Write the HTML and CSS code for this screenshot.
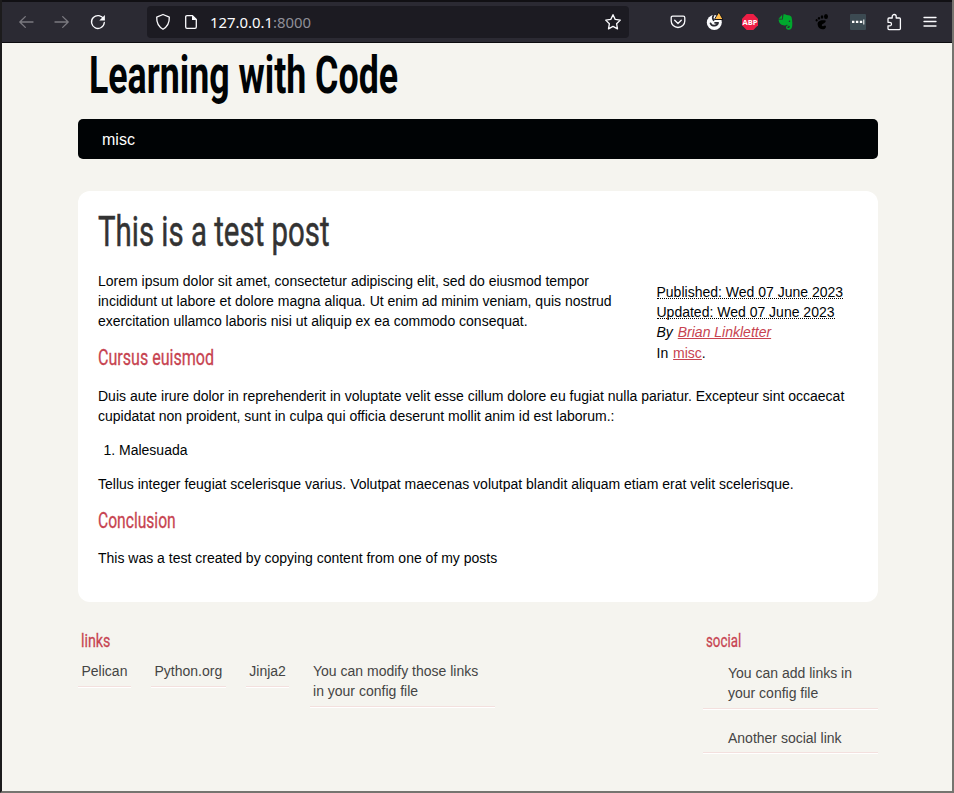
FILE: index.html
```html
<!DOCTYPE html>
<html lang="en">
<head>
<meta charset="utf-8">
<title>This is a test post</title>
<link rel="stylesheet" href="styles.css">
</head>
<body>
<div class="window">
  <header class="toolbar">
    <div class="nav-buttons">
      <svg class="dim" width="16" height="16" viewBox="0 0 16 16"><path d="M15 8H2M7.3 2.6 1.8 8l5.500 5.400"/></svg>
      <svg class="dim" width="16" height="16" viewBox="0 0 16 16"><path d="M1 8h13M8.700 2.600 14.200 8l-5.500 5.400"/></svg>
      <svg width="16" height="16" viewBox="0 0 16 16"><path d="M13.700 5.300A6.400 6.400 0 1 0 14.300 8.500"/><path class="solid" d="M14.900 1v5.600H9.300z"/></svg>
    </div>
    <div class="address">
      <svg width="16" height="18" viewBox="0 0 16 18"><path d="M8 1.500 14.300 4.100C14.500 9.500 12.500 13.800 8 16.300 3.500 13.800 1.500 9.500 1.700 4.100z"/></svg>
      <svg class="page-icon" width="14" height="16" viewBox="0 0 14 16"><path d="M8.500 1.700H3Q1.700 1.700 1.700 3v10Q1.700 14.300 3 14.300h8q1.300 0 1.300-1.300V5.500z"/><path class="solid" d="M8 1.500v4.600h4.700z"/></svg>
      <span class="url">127.0.0.1<span class="port">:8000</span></span>
      <svg class="star" width="18" height="18" viewBox="0 0 18 18"><path d="m9 1.700 2.200 4.700 5.100.7-3.700 3.600.9 5.200L9 13.400l-4.500 2.500.9-5.200L1.700 7.100l5.100-.7z"/></svg>
    </div>
    <div class="extensions">
      <svg width="18" height="18" viewBox="0 0 18 18"><path d="M3.700 3.200h10.600q1.500 0 1.500 1.500V8a6.800 6.500 0 0 1-13.600 0V4.700q0-1.500 1.500-1.500z"/><path d="m5.700 7.300 3.300 3.200 3.300-3.200"/></svg>
      <svg width="18" height="20" viewBox="0 0 18 20"><circle class="solid" cx="9.300" cy="10.500" r="7.500"/><path class="cut" d="M8.600 3.500Q6.800 5.500 8.600 8.300M5.500 11.300q1 2.400 4 2.400 2.900-.2 3.600-2.900H10"/><path class="warn" d="m14 .3 4 7.200H9.800z"/></svg>
      <svg width="18" height="18" viewBox="0 0 18 18"><path class="red" d="M5.700 1h6.600L17 5.700v6.600L12.300 17H5.700L1 12.300V5.700z"/><text class="abp" x="9" y="12" text-anchor="middle">ABP</text></svg>
      <svg width="18" height="18" viewBox="0 0 18 18"><path class="green" d="M6.500 1.300Q8.500.8 9.500 2q4 0 5 2 1.600 7 .2 11-.8 2-3.200 1.700Q8.800 16.500 9 14q.5-2 2.500-1.800v1.300q-1.300 0-1.200 1 .3.700 1.600.5 1-.3.800-2-2.200-.2-2.700-1.600Q9 13 6.500 12.300 2 11.500 1.500 6.500h4.300z"/><path class="green" d="M5.200 1.700v4H1.500z"/><circle class="eye" cx="12.500" cy="8.200" r=".8"/></svg>
      <svg width="18" height="18" viewBox="0 0 18 18"><g class="foot"><ellipse cx="13" cy="3.500" rx="2" ry="2.600"/><ellipse cx="9" cy="4" rx="1.300" ry="1.700"/><ellipse cx="6" cy="5.300" rx="1.100" ry="1.400"/><ellipse cx="3.600" cy="7.200" rx="1" ry="1.200"/><path d="M12.600 7.500c-5-.8-8.600.6-7.900 4.500.8 5.300 8 5.800 8.300 1.400-.3-1.300-1.600-1-2.400-.3-1.200.6-2.200-.3-1.600-1.500.8-1.300 4.300-1.600 3.600-4.100z"/></g></svg>
      <svg width="18" height="18" viewBox="0 0 18 18"><rect class="slate" x="1" y="1" width="16" height="16" rx="1"/><path class="dots" d="M3 7.700h2.400v2.400H3zM6.900 7.700h2.400v2.400H6.900zM10.800 7.700h2.400v2.400h-2.400zM14.300 6.500h1v5h-1z"/></svg>
      <svg width="18" height="18" viewBox="0 0 18 18"><path d="M3 7.500V6q0-1 1-1h3.200V3.500a2 2 0 0 1 4 0V5h3.200q1 0 1 1v9.600q0 1-1 1H4q-1 0-1-1v-2.700h1.700a1.800 1.800 0 0 0 0-3.600H3z"/></svg>
      <svg width="18" height="18" viewBox="0 0 18 18"><path d="M3 4.500h12M3 8.500h12M3 13h12"/></svg>
    </div>
  </header>

  <div class="page">
    <h1 class="site-title"><span class="narrow">Learning with Code</span></h1>
    <nav class="menu"><a>misc</a></nav>

    <article class="post">
      <h2 class="post-title"><span class="narrow">This is a test post</span></h2>
      <div class="meta">
        <div><abbr>Published: Wed 07 June 2023</abbr></div>
        <div><abbr>Updated: Wed 07 June 2023</abbr></div>
        <address>By <a>Brian Linkletter</a></address>
        <div class="category">In <a>misc</a>.</div>
      </div>
      <p>Lorem ipsum dolor sit amet, consectetur adipiscing elit, sed do eiusmod tempor incididunt ut labore et dolore magna aliqua. Ut enim ad minim veniam, quis nostrud exercitation ullamco laboris nisi ut aliquip ex ea commodo consequat.</p>
      <h3 class="cursus"><span class="narrow">Cursus euismod</span></h3>
      <p>Duis aute irure dolor in reprehenderit in voluptate velit esse cillum dolore eu fugiat nulla pariatur. Excepteur sint occaecat cupidatat non proident, sunt in culpa qui officia deserunt mollit anim id est laborum.:</p>
      <ol><li>Malesuada</li></ol>
      <p>Tellus integer feugiat scelerisque varius. Volutpat maecenas volutpat blandit aliquam etiam erat velit scelerisque.</p>
      <h3 class="conclusion"><span class="narrow">Conclusion</span></h3>
      <p>This was a test created by copying content from one of my posts</p>
    </article>

    <section class="extras">
      <div class="blogroll">
        <h4><span class="narrow">links</span></h4>
        <ul>
          <li>Pelican</li>
          <li>Python.org</li>
          <li>Jinja2</li>
          <li class="long">You can modify those links in your config file</li>
        </ul>
      </div>
      <div class="social">
        <h4><span class="narrow">social</span></h4>
        <ul>
          <li>You can add links in your config file</li>
          <li>Another social link</li>
        </ul>
      </div>
    </section>
  </div>
</div>
</body>
</html>
```

FILE: styles.css
```css
* { box-sizing: border-box; }

body {
  margin: 0;
  background: #f5f4ef;
  color: #000305;
  font: 14px/20px "Liberation Sans", Arial, sans-serif;
}

.window {
  height: 793px;
  overflow: hidden;
  border: solid #75746f;
  border-width: 0 2px 2px 0;
  border-left: 2px solid #1c1b1c;
}

/* Browser toolbar */
.toolbar {
  display: flex;
  align-items: center;
  height: 43px;
  margin-right: -2px;
  border-top: 2px solid #111014;
  border-bottom: 1px solid #0c0b0f;
  background: #2b2a33;
}

.toolbar svg {
  flex: none;
  fill: none;
  stroke: #fbfbfe;
  stroke-width: 1.3;
  stroke-linecap: round;
  stroke-linejoin: round;
}

.toolbar .dim { stroke: #7b7a80; }
.toolbar .solid { fill: #fbfbfe; stroke: none; }
.toolbar .cut { stroke: #2b2a33; stroke-width: 1.7; }
.toolbar .warn { fill: #ffbd4f; stroke: #15141a; stroke-width: 1; }
.toolbar .red { fill: #ed1e45; stroke: none; }
.toolbar .green { fill: #00a82d; stroke: none; }
.toolbar .eye { fill: #2b2a33; stroke: none; }
.toolbar .foot { fill: #000; stroke: none; }
.toolbar .slate { fill: #3c4a52; stroke: none; }
.toolbar .dots { fill: #fff; stroke: none; }
.toolbar .abp { fill: #fff; stroke: none; font: 700 7.500px "Open Sans", sans-serif; }

.nav-buttons {
  display: flex;
  gap: 20px;
  width: 145px;
  padding-left: 16px;
}

.address {
  display: flex;
  align-items: center;
  width: 482px;
  height: 32px;
  padding: 0 7px 0 8px;
  border-radius: 4px;
  background: #1c1b22;
}

.page-icon { margin-left: 13px; }
.url { margin-left: 12px; color: #fbfbfe; font: 14.900px/20px "Noto Sans", sans-serif; }
.port { color: #8f8f98; }
.star { margin-left: auto; }

.extensions {
  display: flex;
  align-items: center;
  gap: 18px;
  margin-left: 40px;
}

/* Page */
.page { width: 800px; margin-left: 76px; }

h1, h2, h3, h4 { margin: 0; font-family: Roboto, sans-serif; font-weight: 400; }

.narrow {
  display: inline-block;
  white-space: nowrap;
  transform-origin: 0 50%;
}

.site-title {
  height: 76px;
  padding-left: 11px;
  font-size: 51px;
  font-weight: 700;
  line-height: 65px;
}
.site-title .narrow { transform: scaleX(.7); }

.menu {
  height: 40px;
  padding-left: 24px;
  border-radius: 5px;
  background: #000305;
  color: #fff;
  font-size: 16px;
  line-height: 41px;
}

.post {
  height: 411px;
  margin-top: 32px;
  padding: 20px;
  border-radius: 12px;
  background: #fff;
}

.post p { margin: 0 0 14px; }
.post a { color: #c74350; text-decoration: underline; }

.post-title {
  height: 60px;
  color: #333;
  font-size: 42px;
  line-height: 42px;
}
.post-title .narrow { transform: scaleX(.7); -webkit-text-stroke: .5px #333; }

.meta {
  float: right;
  width: 201.500px;
  height: 96px;
  margin: 11px 0 0 29.500px;
}
.meta abbr { border-bottom: 1px dotted #000; text-decoration: none; display: inline-block; height: 17px; line-height: 20px; }
.meta div { height: 20px; }
.meta a { margin-left: 1px; }
.meta .category { margin-top: 1px; }

h3, h4 { color: #c74451; }
h3 { height: 41px; font-size: 22px; line-height: 26px; }
h3 .narrow { transform: scaleX(.73); -webkit-text-stroke: .3px #c74451; }
.conclusion { height: 40px; }
.conclusion .narrow { transform: scaleX(.71); }

.post ol { margin: 0 0 14px; padding-left: 21px; }

.extras { display: flex; justify-content: space-between; padding-top: 28px; color: #444; }

h4 { height: 26px; font-size: 19px; line-height: 22px; padding-left: 3px; }
h4 .narrow { transform: scaleX(.7); -webkit-text-stroke: .3px #c74451; }
.blogroll h4 .narrow { transform: scaleX(.75); }

.extras ul { margin: 0; padding: 0; list-style: none; }
.extras li { border-bottom: 1px solid #f3e0de; box-shadow: 0 1px #fff; }

.blogroll ul { display: flex; align-items: flex-start; gap: 20.100px; }
.blogroll li { padding: 5px 3.500px; }
.blogroll .long { width: 185px; }

.social { width: 175px; }
.social li { padding: 7px 25px 5px; }
.social li + li { padding: 19px 25px 4px; }
```
